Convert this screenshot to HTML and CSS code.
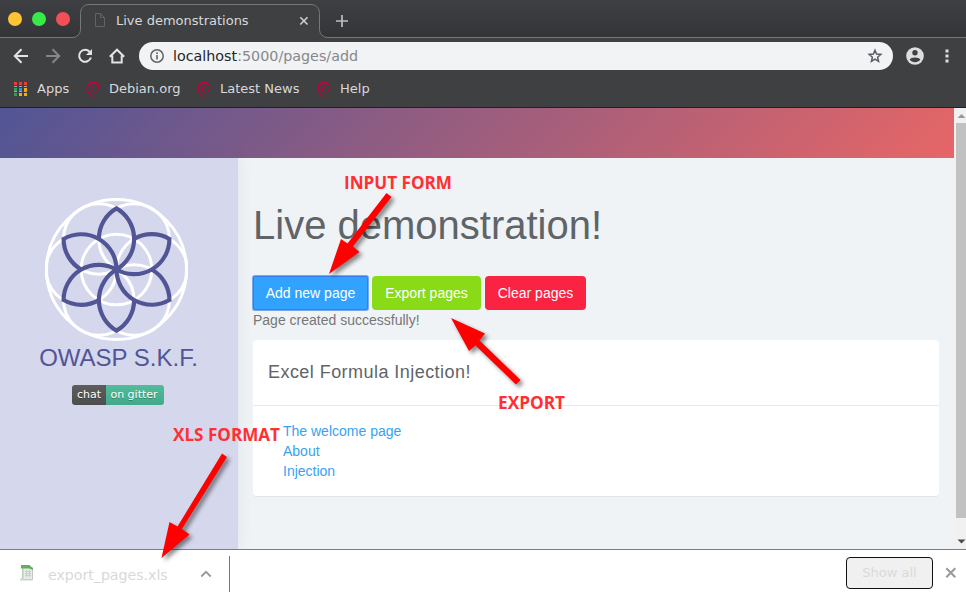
FILE: index.html
```
<!DOCTYPE html>
<html lang="en">
<head>
<meta charset="utf-8">
<title>Live demonstrations</title>
<link rel="stylesheet" href="styles.css">
</head>
<body>
<svg class="defs" width="0" height="0" aria-hidden="true">
  <symbol id="swirl" viewBox="0 0 14 17">
    <path d="M7 16.200C3.500 13.500 1.100 10.800 1.100 7.200 1.100 3.600 4 1.300 7.500 1.300c3.300 0 5.300 2 5.300 4.700 0 2.900-2 4.900-4.400 4.900-1.900 0-3.100-1.100-3.100-2.700 0-1.500 1.100-2.500 2.700-2.500" fill="none" stroke="#b8083f" stroke-width="1.300"/>
    <path d="M1.800 5C3 2.600 5 1.700 7.300 1.700c2.200 0 3.800.7 4.700 2" fill="none" stroke="#b8083f" stroke-width="2"/>
  </symbol>
</svg>

<header class="browser">
  <div class="tabstrip">
    <div class="lights"><i class="min"></i><i class="max"></i><i class="end"></i></div>
    <div class="tab">
      <svg class="tab-shape" width="256" height="35"><path d="M0 33.500C5 33.500 8.500 30 8.500 25V9.500C8.500 4.500 11.500.5 17 .5H239c5.500 0 8.500 4 8.500 9V25c0 5 3.500 8.500 8.500 8.500V35H0z" fill="#3f4042"/><path d="M0 33.500C5 33.500 8.500 30 8.500 25V9.500C8.500 4.500 11.500.5 17 .5H239c5.500 0 8.500 4 8.500 9V25c0 5 3.500 8.500 8.500 8.500" fill="none" stroke="#77787a"/></svg>
      <svg class="page-icon" width="12" height="15"><path d="M1.500.5h5l4 4v9h-9zM6.500.5v4h4" fill="none" stroke="#626365"/></svg>
      <span class="tab-title">Live demonstrations</span>
      <svg class="tab-close" width="10" height="10"><path d="M1.300 1.300l7.200 7.200M8.500 1.300L1.300 8.500" stroke="#cfd0d1" stroke-width="1.600"/></svg>
    </div>
    <svg class="new-tab" width="14" height="14"><path d="M7 1v12M1 7h12" stroke="#bdbebf" stroke-width="1.700"/></svg>
  </div>

  <div class="toolbar">
    <svg width="16" height="16"><path d="M15 8H2M8.500 1.300L1.800 8l6.700 6.700" fill="none" stroke="#e2e3e4" stroke-width="2"/></svg>
    <svg width="16" height="16"><path d="M1 8h13M7.500 1.300L14.200 8l-6.700 6.700" fill="none" stroke="#85868a" stroke-width="2"/></svg>
    <svg width="16" height="16"><path d="M12.700 3.800A6 6 0 1 0 13.900 9.500" fill="none" stroke="#e2e3e4" stroke-width="2"/><path d="M15 1v6H9z" fill="#e2e3e4"/></svg>
    <svg width="16" height="16"><path d="M.8 8.700L8 1.700l7.200 7M3.300 7.500V14.500h9.400V7.500" fill="none" stroke="#e2e3e4" stroke-width="2"/></svg>
    <div class="omnibox">
      <svg width="14" height="14"><circle cx="7" cy="7" r="6.200" fill="none" stroke="#606468" stroke-width="1.500"/><path d="M7 6v4.500M7 3.300v1.600" stroke="#606468" stroke-width="1.600"/></svg>
      <span class="url">localhost<em>:5000/pages/add</em></span>
      <svg class="star" width="16" height="16"><path d="M8 2.200l1.600 3.900 4.200.35-3.200 2.750.97 4.100L8 11.100l-3.570 2.200.97-4.100-3.200-2.750 4.200-.35z" fill="none" stroke="#5a5d62" stroke-width="1.500"/></svg>
    </div>
    <svg class="avatar" width="18" height="18"><circle cx="9" cy="9" r="8.800" fill="#dddedf"/><circle cx="9" cy="5.800" r="2.700" fill="#3f4042"/><path d="M3.700 12.700c1-3 9.600-3 10.600 0-2.300 3.300-8.300 3.300-10.600 0z" fill="#3f4042"/></svg>
    <svg class="menu" width="4" height="14"><path d="M.5.5h3v3h-3zM.5 5.500h3v3h-3zM.5 10.500h3v3h-3z" fill="#dddedf"/></svg>
  </div>

  <nav class="bookmarks">
    <a class="apps"><svg width="13" height="14"><path d="M0 0h3v3H0zM5 0h3v3H5zM10 0h3v3h-3z" fill="#f23a35"/><path d="M0 6h3v3H0zM0 11h3v3H0z" fill="#2fa05a"/><path d="M5 6h3v3H5z" fill="#2c8cf4"/><path d="M10 6h3v3h-3zM5 11h3v3H5zM10 11h3v3h-3z" fill="#f9ab0a"/><path d="M0 4.500h3M5 4.500h3M10 4.500h3M0 9.500h3M5 9.500h3M10 9.500h3" stroke="#a5a6a7"/></svg>Apps</a>
    <a class="debian"><svg width="14" height="17"><use href="#swirl"/></svg>Debian.org</a>
    <a class="news"><svg width="14" height="17"><use href="#swirl"/></svg>Latest News</a>
    <a class="help"><svg width="14" height="17"><use href="#swirl"/></svg>Help</a>
  </nav>
</header>

<div class="viewport">
  <div class="site">
    <div class="banner"></div>
    <div class="columns">
      <aside>
        <svg class="logo" width="143" height="143" viewBox="-71.500 -71.500 143 143">
          <defs><path id="petal" d="M0 0A35.300 35.300 0 0 0 0-61.100A35.300 35.300 0 0 0-17.650-30.570"/></defs>
          <g fill="none" stroke="#fff" stroke-width="3">
            <circle r="70"/><circle r="35.300"/>
            <circle cx="35.300" r="35.300"/><circle cx="-35.300" r="35.300"/>
            <circle cx="17.650" cy="30.570" r="35.300"/><circle cx="-17.650" cy="30.570" r="35.300"/>
            <circle cx="17.650" cy="-30.570" r="35.300"/><circle cx="-17.650" cy="-30.570" r="35.300"/>
          </g>
          <g fill="none" stroke="#515596" stroke-width="4.200" stroke-linejoin="miter">
            <use href="#petal"/><use href="#petal" transform="rotate(60)"/><use href="#petal" transform="rotate(120)"/>
            <use href="#petal" transform="rotate(180)"/><use href="#petal" transform="rotate(240)"/><use href="#petal" transform="rotate(300)"/>
          </g>
        </svg>
        <div class="brand">OWASP S.K.F.</div>
        <div class="gitter"><span>chat</span><b>on gitter</b></div>
      </aside>
      <main>
        <h1>Live demonstration!</h1>
        <div class="actions"><a class="btn add">Add new page</a><a class="btn export">Export pages</a><a class="btn clear">Clear pages</a></div>
        <p class="status">Page created successfully!</p>
        <section class="card">
          <h2>Excel Formula Injection!</h2>
          <ul><li>The welcome page</li><li>About</li><li>Injection</li></ul>
        </section>
      </main>
    </div>
  </div>
  <div class="scrollbar">
    <svg width="12" height="15"><path d="M3.500 10L7.500 6l4 4z" fill="#999"/></svg>
    <div class="thumb"></div>
    <svg width="12" height="15"><path d="M3.500 5.500h8l-4 4z" fill="#4b4b4b"/></svg>
  </div>
</div>

<footer class="downloads">
  <div class="item">
    <svg width="16" height="18"><path d="M4 3.500h9.500v12H4z" fill="#e8eae8" stroke="#c6c8c6"/><path d="M2 1h8.500L14 4.500v1.500L10 4.500H2z" fill="#62ae5e"/><path d="M6 7.500h6M6 9.500h6M6 11.500h6M7.500 6v7M10.500 6v7" stroke="#c3c9c3" stroke-width=".8"/><path d="M3.500 5v8.500c0 2-1.500 2-2.500 1.500" fill="none" stroke="#b9d3b6" stroke-width="1.200"/><path d="M1 16h13" stroke="#cfd1cf"/></svg>
    <span>export_pages.xls</span>
    <svg class="chevron" width="12" height="8"><path d="M1.300 6.500L6 1.800l4.700 4.700" fill="none" stroke="#999" stroke-width="1.800"/></svg>
  </div>
  <button>Show all</button>
  <svg class="dismiss" width="12" height="12"><path d="M1.300 1.300l9 9M10.300 1.300l-9 9" stroke="#999" stroke-width="2"/></svg>
</footer>

<svg class="annotations" width="966" height="595">
  <g class="arrows">
    <path d="M386.500 193L391.500 197 353 246.500 359.500 252 329 274 341 239 347.500 243.500z"/>
    <path d="M520.500 380L516 384.500 475.500 345.500 469 351 451 318 485 333.500 479.500 340.500z"/>
    <path d="M222 453.500L227 457 182 529 189.500 534.500 161.500 558 169.500 522 177.500 526.500z"/>
  </g>
  <text x="344" y="189" textLength="108" lengthAdjust="spacingAndGlyphs">INPUT FORM</text>
  <text x="498" y="409" textLength="67" lengthAdjust="spacingAndGlyphs">EXPORT</text>
  <text x="173" y="441" textLength="107" lengthAdjust="spacingAndGlyphs">XLS FORMAT</text>
</svg>
</body>
</html>
```
FILE: styles.css
```
* { box-sizing: border-box; }
body {
  margin: 0;
  width: 966px;
  height: 595px;
  overflow: hidden;
  position: relative;
  display: flex;
  flex-direction: column;
  font: 14px/20px "Liberation Sans", sans-serif;
}
svg { display: block; flex: none; }
.defs { position: absolute; }

.browser {
  height: 108px;
  background: #3f4042;
  border-bottom: 1px solid #202124;
  font-family: "DejaVu Sans", sans-serif;
  color: #d8d9da;
}
.tabstrip {
  height: 38px;
  display: flex;
  background: linear-gradient(#3e3f42, #343538);
  border-bottom: 1px solid #77787a;
}
.lights { width: 72px; display: flex; gap: 10px; padding: 12px 0 0 8px; }
.lights i { width: 14px; height: 14px; border-radius: 50%; }
.min { background: #fdc433; }
.max { background: #38ea49; }
.end { background: #f44f56; }
.tab {
  position: relative;
  width: 256px;
  height: 35px;
  margin-top: 4px;
  display: flex;
  align-items: center;
  padding: 0 19px 2px 22px;
}
.tab-shape { position: absolute; left: 0; top: 0; }
.page-icon, .tab-title, .tab-close { position: relative; }
.tab-title { font-size: 13px; margin-left: 10px; flex: 1; white-space: nowrap; }
.new-tab { margin: 14px 0 0 7px; }

.toolbar { height: 36px; display: flex; align-items: center; padding-left: 13px; gap: 16px; }
.omnibox {
  width: 754px;
  height: 28px;
  margin-left: -2px;
  padding: 0 10px 0 11px;
  border-radius: 14px;
  background: #f1f3f5;
  display: flex;
  align-items: center;
}
.url { flex: 1; margin-left: 9px; font-size: 14.300px; color: #242527; }
.url em { font-style: normal; color: #85888c; }
.avatar { margin-left: -3px; }
.menu { margin-left: 5px; }

.bookmarks { display: flex; height: 29px; align-items: center; font-size: 13px; padding-left: 14px; }
.bookmarks a { display: flex; align-items: center; white-space: nowrap; }
.bookmarks svg { margin-top: 1px; }
.apps { width: 72px; gap: 10px; }
.debian { width: 111px; gap: 9px; }
.news { width: 120px; gap: 9px; }
.help { gap: 9px; }

.viewport { height: 441px; display: flex; }
.site { width: 954px; background: #eff3f6; }
.banner { height: 50px; background: linear-gradient(135deg, #515596, #e76666); }
.columns { display: flex; height: 391px; }
aside {
  width: 238px;
  background: #d5d7ed;
  padding: 40px 5px 0 0;
  display: flex;
  flex-direction: column;
  align-items: center;
  box-shadow: 0 0 15px rgba(80, 90, 110, .09);
}
.brand { color: #515596; font-size: 24px; line-height: 32px; margin: 1px 0 11px 4px; white-space: nowrap; }
.gitter {
  width: 92px;
  height: 20px;
  display: flex;
  margin-left: 3px;
  border-radius: 3px;
  overflow: hidden;
  color: #fff;
  font: 11px/20px "DejaVu Sans", sans-serif;
  text-align: center;
  text-shadow: 0 1px rgba(1, 1, 1, .3);
}
.gitter span { width: 34px; background: linear-gradient(#5d5d5d, #4d4d4d); }
.gitter b { width: 58px; padding-right: 2px; font-weight: normal; white-space: nowrap; background: linear-gradient(#51bd9a, #42a989); }
main { width: 716px; padding: 40px 15px 0; }
h1 { margin: 0; height: 78px; font-size: 40px; line-height: 54px; font-weight: normal; color: #5f6468; white-space: nowrap; }
.actions { display: flex; gap: 4px; }
.btn { height: 34px; line-height: 34px; border-radius: 4px; color: #fff; text-align: center; white-space: nowrap; }
.add { width: 115px; background: #31a3ff; border-radius: 2px; box-shadow: inset 0 0 0 1px #397ee8, 0 0 0 1px #79a9ec; }
.export { width: 109px; background: #89da17; }
.clear { width: 101px; background: #fb2342; }
.status { margin: 0 0 10px; color: #777; }
.card { height: 157px; width: 686px; background: #fff; border-radius: 4px; border-bottom: 1px solid #e1e4e6; }
h2 {
  height: 66px;
  margin: 0;
  padding-left: 15px;
  font-size: 18px;
  font-weight: normal;
  line-height: 64px;
  letter-spacing: .45px;
  color: #5f6468;
  border-bottom: 1px solid #e7eaec;
}
ul { list-style: none; margin: 0; padding: 15px 30px; color: #37a2f4; }
.scrollbar { width: 12px; background: #f1f1f1; display: flex; flex-direction: column; }
.thumb { height: 395px; margin-left: 2px; background: #c1c1c1; }
.scrollbar svg:last-child { margin-top: auto; }

.downloads {
  height: 46px;
  display: flex;
  background: #fff;
  border-top: 1px solid #7d7e80;
  font-family: "DejaVu Sans", sans-serif;
}
.item {
  width: 230px;
  height: 36px;
  margin-top: 6px;
  border-right: 1px solid #777;
  display: flex;
  align-items: center;
  padding-left: 19px;
  color: #d9d9d9;
  font-size: 14.150px;
}
.item > svg:first-child { margin-top: -2px; }
.item span { width: 119px; margin: 2px 33px 0 13px; white-space: nowrap; }
.downloads button {
  width: 87px;
  height: 32px;
  margin: 7px 0 0 616px;
  padding: 0;
  border: 1px solid #111;
  border-radius: 4px;
  background: #f0f0f0;
  color: #dadada;
  font: 13px/28px "DejaVu Sans", sans-serif;
}
.dismiss { margin: 17px 0 0 12px; }

.annotations { position: absolute; left: 0; top: 0; }
.arrows { fill: #fe0000; filter: drop-shadow(3px 3px 2px rgba(0, 0, 0, .45)); }
.annotations text { font: bold 18px "Open Sans", sans-serif; fill: #ff2f33; }
```
